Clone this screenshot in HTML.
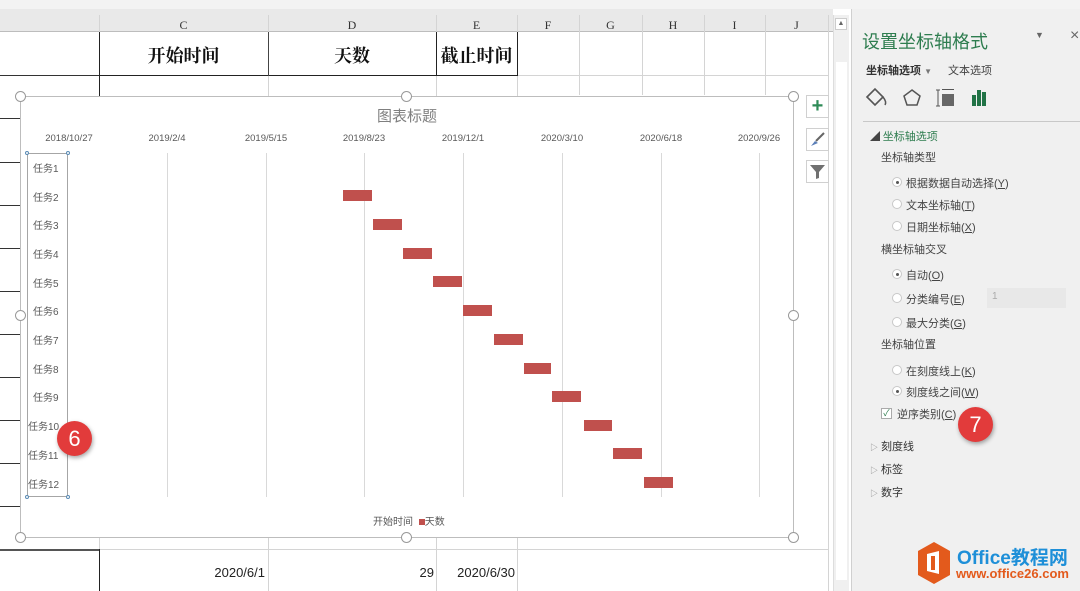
<!DOCTYPE html>
<html><head><meta charset="utf-8"><style>
*{margin:0;padding:0;box-sizing:border-box}
body{width:1080px;height:591px;overflow:hidden;position:relative;background:#fff;font-family:"Liberation Sans","Noto Sans CJK SC",sans-serif}
.a{position:absolute}
.t{position:absolute;white-space:nowrap}
.hl{position:absolute;height:1px;background:#d4d4d4}
.vl{position:absolute;width:1px;background:#d4d4d4}
.ch{position:absolute;top:18px;font:12px "Liberation Serif",serif;color:#333;text-align:center}
.lab{position:absolute;left:30px;font-size:10px;color:#595959}
.bar{position:absolute;height:11px;width:29px;background:#c0504d}
.dt{position:absolute;top:133px;font-size:9.5px;color:#595959;width:80px;text-align:center}
.g{position:absolute;top:153px;height:344px;width:1px;background:#d9d9d9}
.h{position:absolute;width:11px;height:11px;border:1.5px solid #999;border-radius:50%;background:#fff}
.p{position:absolute;font-size:11px;color:#444}
.r{position:absolute;width:10px;height:10px;border:1px solid #c8c8c8;border-radius:50%;background:#fff}
.r.on::after{content:"";position:absolute;left:2.5px;top:2.5px;width:3px;height:3px;border-radius:50%;background:#555}
.btn{position:absolute;left:806px;width:23px;height:23px;border:1px solid #d0d0d0;background:#fff}
</style></head><body>
<div class="a" style="left:0;top:0;width:1080px;height:9px;background:#f3f3f3"></div>
<div class="a" style="left:0;top:9px;width:833px;height:23px;background:#e9e9e9;border-bottom:1px solid #bdbdbd"></div>
<div class="ch" style="left:99px;width:169px">C</div>
<div class="ch" style="left:268px;width:168px">D</div>
<div class="ch" style="left:436px;width:81px">E</div>
<div class="ch" style="left:517px;width:62px">F</div>
<div class="ch" style="left:579px;width:63px">G</div>
<div class="ch" style="left:642px;width:62px">H</div>
<div class="ch" style="left:704px;width:61px">I</div>
<div class="ch" style="left:765px;width:63px">J</div>
<!-- grid verticals -->
<div class="vl" style="left:99px;top:15px;height:576px"></div>
<div class="vl" style="left:268px;top:15px;height:576px"></div>
<div class="vl" style="left:436px;top:15px;height:576px"></div>
<div class="vl" style="left:517px;top:15px;height:576px"></div>
<div class="vl" style="left:579px;top:15px;height:80px"></div>
<div class="vl" style="left:642px;top:15px;height:80px"></div>
<div class="vl" style="left:704px;top:15px;height:80px"></div>
<div class="vl" style="left:765px;top:15px;height:80px"></div>
<div class="vl" style="left:828px;top:15px;height:576px"></div>
<div class="hl" style="left:517px;top:75px;width:311px"></div>
<div class="hl" style="left:0;top:549px;width:828px"></div>
<!-- header cells -->
<div class="a" style="left:99px;top:32px;width:419px;height:44px;border-left:1px solid #222;border-right:1px solid #222;border-bottom:1.5px solid #222"></div>
<div class="a" style="left:268px;top:32px;width:1px;height:44px;background:#444"></div>
<div class="a" style="left:436px;top:32px;width:1px;height:44px;background:#222"></div>
<div class="a" style="left:0;top:75px;width:99px;height:1px;background:#333"></div>
<div class="t" style="left:99px;top:42px;width:169px;text-align:center;font:bold 18px 'Noto Serif CJK SC',serif;color:#111">开始时间</div>
<div class="t" style="left:268px;top:42px;width:168px;text-align:center;font:bold 18px 'Noto Serif CJK SC',serif;color:#111">天数</div>
<div class="t" style="left:436px;top:42px;width:81px;text-align:center;font:bold 18px 'Noto Serif CJK SC',serif;color:#111">截止时间</div>
<div class="vl" style="left:99px;top:76px;height:21px;background:#222"></div>
<!-- left row lines -->
<div class="a" style="left:0;top:118px;width:20px;height:1px;background:#333"></div>
<div class="a" style="left:0;top:162px;width:20px;height:1px;background:#333"></div>
<div class="a" style="left:0;top:205px;width:20px;height:1px;background:#333"></div>
<div class="a" style="left:0;top:248px;width:20px;height:1px;background:#333"></div>
<div class="a" style="left:0;top:291px;width:20px;height:1px;background:#333"></div>
<div class="a" style="left:0;top:334px;width:20px;height:1px;background:#333"></div>
<div class="a" style="left:0;top:377px;width:20px;height:1px;background:#333"></div>
<div class="a" style="left:0;top:420px;width:20px;height:1px;background:#333"></div>
<div class="a" style="left:0;top:463px;width:20px;height:1px;background:#333"></div>
<div class="a" style="left:0;top:506px;width:20px;height:1px;background:#333"></div>
<div class="a" style="left:0;top:549px;width:99px;height:2px;background:#555"></div>
<div class="vl" style="left:99px;top:549px;height:42px;background:#222"></div>
<div class="t" style="left:200px;top:565px;width:65px;text-align:right;font-size:13px;color:#222">2020/6/1</div>
<div class="t" style="left:400px;top:565px;width:34px;text-align:right;font-size:13px;color:#222">29</div>
<div class="t" style="left:440px;top:565px;width:75px;text-align:right;font-size:13px;color:#222">2020/6/30</div>
<!-- chart -->
<div class="a" style="left:20px;top:96px;width:774px;height:442px;background:#fff;border:1px solid #bdbdbd"></div>
<div class="t" style="left:307px;top:105px;width:200px;text-align:center;font-size:15px;color:#7f7f7f">图表标题</div>
<div class="dt" style="left:29px">2018/10/27</div>
<div class="dt" style="left:127px">2019/2/4</div>
<div class="dt" style="left:226px">2019/5/15</div>
<div class="dt" style="left:324px">2019/8/23</div>
<div class="dt" style="left:423px">2019/12/1</div>
<div class="dt" style="left:522px">2020/3/10</div>
<div class="dt" style="left:621px">2020/6/18</div>
<div class="dt" style="left:719px">2020/9/26</div>
<div class="g" style="left:167px"></div><div class="g" style="left:266px"></div><div class="g" style="left:364px"></div><div class="g" style="left:463px"></div><div class="g" style="left:562px"></div><div class="g" style="left:661px"></div><div class="g" style="left:759px"></div>
<div class="a" style="left:27px;top:153px;width:41px;height:344px;border:1px solid #a6a6a6"></div>
<div class="a" style="left:25px;top:151px;width:4px;height:4px;border:1px solid #5b8bb5;border-radius:50%;background:#fff"></div>
<div class="a" style="left:66px;top:151px;width:4px;height:4px;border:1px solid #5b8bb5;border-radius:50%;background:#fff"></div>
<div class="a" style="left:25px;top:495px;width:4px;height:4px;border:1px solid #5b8bb5;border-radius:50%;background:#fff"></div>
<div class="a" style="left:66px;top:495px;width:4px;height:4px;border:1px solid #5b8bb5;border-radius:50%;background:#fff"></div>
<div class="lab" style="left:33px;top:160px">任务1</div>
<div class="lab" style="left:33px;top:189px">任务2</div>
<div class="lab" style="left:33px;top:217px">任务3</div>
<div class="lab" style="left:33px;top:246px">任务4</div>
<div class="lab" style="left:33px;top:275px">任务5</div>
<div class="lab" style="left:33px;top:303px">任务6</div>
<div class="lab" style="left:33px;top:332px">任务7</div>
<div class="lab" style="left:33px;top:361px">任务8</div>
<div class="lab" style="left:33px;top:389px">任务9</div>
<div class="lab" style="left:28px;top:418px">任务10</div>
<div class="lab" style="left:28px;top:447px">任务11</div>
<div class="lab" style="left:28px;top:476px">任务12</div>
<div class="bar" style="left:343px;top:190px"></div>
<div class="bar" style="left:373px;top:219px"></div>
<div class="bar" style="left:403px;top:248px"></div>
<div class="bar" style="left:433px;top:276px"></div>
<div class="bar" style="left:463px;top:305px"></div>
<div class="bar" style="left:494px;top:334px"></div>
<div class="bar" style="left:524px;top:363px;width:27px"></div>
<div class="bar" style="left:552px;top:391px"></div>
<div class="bar" style="left:584px;top:420px;width:28px"></div>
<div class="bar" style="left:613px;top:448px"></div>
<div class="bar" style="left:644px;top:477px"></div>
<div class="t" style="left:373px;top:513px;font-size:10px;color:#595959">开始时间 <span style="display:inline-block;width:6px;height:6px;background:#c0504d;margin-left:3px"></span>天数</div>
<div class="h" style="left:15px;top:91px"></div><div class="h" style="left:401px;top:91px"></div><div class="h" style="left:788px;top:91px"></div>
<div class="h" style="left:15px;top:310px"></div><div class="h" style="left:788px;top:310px"></div>
<div class="h" style="left:15px;top:532px"></div><div class="h" style="left:401px;top:532px"></div><div class="h" style="left:788px;top:532px"></div>
<div class="btn" style="top:95px;color:#2e8b57;font:bold 20px sans-serif;text-align:center;line-height:21px">+</div>
<div class="btn" style="top:128px"><svg width="21" height="21"><path d="M4 17 L8 12 L11 14 Z" fill="#5b7fb8"/><path d="M9 12 L17 4" stroke="#666" stroke-width="2"/></svg></div>
<div class="btn" style="top:160px"><svg width="21" height="21"><path d="M3 4 H18 L12 11 V17 L9 18 V11 Z" fill="#707070"/></svg></div>
<!-- badge 6 -->
<div class="a" style="left:57px;top:421px;width:35px;height:35px;border-radius:50%;background:#e23b3b;box-shadow:1px 2px 4px rgba(0,0,0,.35);color:#fff;font-size:22px;text-align:center;line-height:35px">6</div>
<!-- scrollbar -->
<div class="a" style="left:833px;top:15px;width:16px;height:576px;background:#f0f0f0;border-left:1px solid #ddd"></div>
<div class="a" style="left:835px;top:18px;width:12px;height:12px;background:#fff;border:1px solid #ccc;font-size:7px;text-align:center;line-height:10px;color:#666">▲</div>
<div class="a" style="left:836px;top:62px;width:11px;height:178px;background:#fff"></div>
<div class="a" style="left:836px;top:240px;width:11px;height:340px;background:#fff"></div>
<!-- panel -->
<div class="a" style="left:851px;top:9px;width:229px;height:582px;background:#f0f0f0;border-left:1px solid #d0d0d0"></div>
<div class="t" style="left:862px;top:28px;font-size:18px;color:#2e7d4f">设置坐标轴格式</div>
<div class="t" style="left:1035px;top:30px;font-size:9px;color:#666">▼</div>
<div class="t" style="left:1070px;top:27px;font-size:16px;color:#666">×</div>
<div class="t" style="left:866px;top:62px;font-size:11px;font-weight:bold;color:#333">坐标轴选项 <span style="font-size:8px;color:#777">▼</span></div>
<div class="t" style="left:948px;top:62px;font-size:11px;color:#444">文本选项</div>
<svg class="a" style="left:864px;top:86px" width="130" height="26">
<path d="M3 11 L11 3 L19 11 L11 19 Z" fill="none" stroke="#555" stroke-width="1.6"/><path d="M19 11 Q23 16 21 19" fill="none" stroke="#555" stroke-width="1.5"/>
<path d="M48 4 L56 10 L53 19 L43 19 L40 10 Z" fill="none" stroke="#555" stroke-width="1.5"/>
<path d="M74 4 V20 M72 4 H76 M72 20 H76" stroke="#555" stroke-width="1"/><rect x="78" y="8" width="12" height="12" fill="#666"/><rect x="78" y="3" width="12" height="1" fill="#555"/>
<rect x="108" y="9" width="4" height="11" fill="#217346"/><rect x="113" y="4" width="4" height="16" fill="#217346"/><rect x="118" y="6" width="4" height="14" fill="#217346"/>
</svg>
<div class="a" style="left:863px;top:121px;width:217px;height:1px;background:#c8c8c8"></div>
<div class="t" style="left:870px;top:128px;font-size:10px;color:#444">◢ <span style="font-size:11px;color:#2e7d4f">坐标轴选项</span></div>
<div class="p" style="left:881px;top:149px">坐标轴类型</div>
<div class="r on" style="left:892px;top:177px"></div><div class="p" style="left:906px;top:175px">根据数据自动选择(<u>Y</u>)</div>
<div class="r" style="left:892px;top:199px"></div><div class="p" style="left:906px;top:197px">文本坐标轴(<u>T</u>)</div>
<div class="r" style="left:892px;top:221px"></div><div class="p" style="left:906px;top:219px">日期坐标轴(<u>X</u>)</div>
<div class="p" style="left:881px;top:241px">横坐标轴交叉</div>
<div class="r on" style="left:892px;top:269px"></div><div class="p" style="left:906px;top:267px">自动(<u>O</u>)</div>
<div class="r" style="left:892px;top:293px"></div><div class="p" style="left:906px;top:291px">分类编号(<u>E</u>)</div>
<div class="a" style="left:987px;top:288px;width:79px;height:20px;background:#e8e8e8;font-size:10px;color:#aaa;padding:3px 5px">1</div>
<div class="r" style="left:892px;top:317px"></div><div class="p" style="left:906px;top:315px">最大分类(<u>G</u>)</div>
<div class="p" style="left:881px;top:336px">坐标轴位置</div>
<div class="r" style="left:892px;top:365px"></div><div class="p" style="left:906px;top:363px">在刻度线上(<u>K</u>)</div>
<div class="r on" style="left:892px;top:386px"></div><div class="p" style="left:906px;top:384px">刻度线之间(<u>W</u>)</div>
<div class="a" style="left:881px;top:408px;width:11px;height:11px;border:1px solid #aaa;background:#fff;font-size:9px;line-height:9px;color:#2e7d4f;text-align:center">✓</div>
<div class="p" style="left:897px;top:406px">逆序类别(<u>C</u>)</div>
<div class="a" style="left:958px;top:407px;width:35px;height:35px;border-radius:50%;background:#e23b3b;box-shadow:1px 2px 4px rgba(0,0,0,.35);color:#fff;font-size:22px;text-align:center;line-height:35px">7</div>
<div class="t" style="left:870px;top:438px;font-size:11px;color:#333"><span style="font-size:8px;color:#888">▷</span> 刻度线</div>
<div class="t" style="left:870px;top:461px;font-size:11px;color:#333"><span style="font-size:8px;color:#888">▷</span> 标签</div>
<div class="t" style="left:870px;top:484px;font-size:11px;color:#333"><span style="font-size:8px;color:#888">▷</span> 数字</div>
<!-- logo -->
<svg class="a" style="left:916px;top:541px" width="36" height="44"><path d="M18 1 L34 10 L34 34 L18 43 L2 34 L2 10 Z" fill="#e35a1c"/><path d="M11 13 L23 10 V33 L11 30 Z" fill="#fff"/><rect x="15" y="15" width="4" height="14" fill="#e35a1c"/></svg>
<div class="t" style="left:957px;top:543px;font-size:19px;font-weight:bold;color:#1e8fd8">Office教程网</div>
<div class="t" style="left:956px;top:566px;font-size:13px;font-weight:bold;color:#e35a1c">www.office26.com</div>
</body></html>
